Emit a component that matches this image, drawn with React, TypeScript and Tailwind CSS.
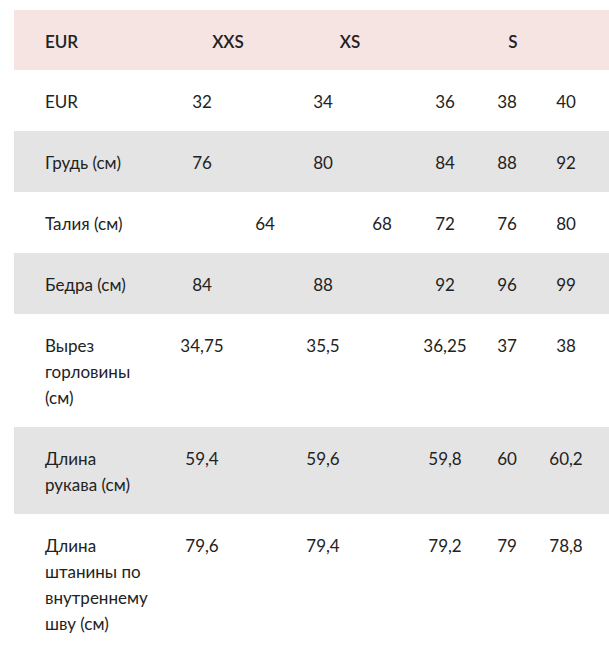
import React from "react";

type Row = { label: React.ReactNode; values: string[]; gray?: boolean };

const rows: Row[] = [
  { label: "EUR", values: ["32", "", "34", "", "36", "38", "40"] },
  { label: "Грудь (см)", values: ["76", "", "80", "", "84", "88", "92"], gray: true },
  { label: "Талия (см)", values: ["", "64", "", "68", "72", "76", "80"] },
  { label: "Бедра (см)", values: ["84", "", "88", "", "92", "96", "99"], gray: true },
  {
    label: (
      <>
        Вырез
        <br />
        горловины
        <br />
        (см)
      </>
    ),
    values: ["34,75", "", "35,5", "", "36,25", "37", "38"],
  },
  {
    label: (
      <>
        Длина
        <br />
        рукава (см)
      </>
    ),
    values: ["59,4", "", "59,6", "", "59,8", "60", "60,2"],
    gray: true,
  },
  {
    label: (
      <>
        Длина
        <br />
        штанины по
        <br />
        внутреннему
        <br />
        шву (см)
      </>
    ),
    values: ["79,6", "", "79,4", "", "79,2", "79", "78,8"],
  },
];

export default function App() {
  return (
    <div className="w-[609px] h-[660px] overflow-hidden bg-white pl-[14px] pt-[10px] font-['Lato','Liberation_Sans',sans-serif] text-[17px] leading-[26px] text-[#222]">
      <table className="table-fixed border-collapse w-[625px]">
        <colgroup>
          <col className="w-[151px]" />
          <col className="w-[74px]" />
          <col className="w-[52px]" />
          <col className="w-[64px]" />
          <col className="w-[54px]" />
          <col className="w-[72px]" />
          <col className="w-[52px]" />
          <col className="w-[66px]" />
          <col className="w-[40px]" />
        </colgroup>
        <thead>
          <tr className="bg-[#f5e4e2] h-[60px]">
            <th className="pl-[31px] pt-[4px] text-left font-semibold">EUR</th>
            <th colSpan={2} className="pt-[4px] text-center font-semibold">XXS</th>
            <th colSpan={2} className="pt-[4px] text-center font-semibold">XS</th>
            <th colSpan={3} className="pl-[18px] pt-[4px] text-center font-semibold">S</th>
            <th />
          </tr>
        </thead>
        <tbody>
          {rows.map((row, i) => (
            <tr key={i} className={row.gray ? "bg-[#e4e4e4]" : "bg-white"}>
              <td className="pl-[31px] pt-[19px] pb-[16px] align-top whitespace-nowrap">{row.label}</td>
              {row.values.map((v, j) => (
                <td key={j} className="pt-[19px] pb-[16px] align-top text-center whitespace-nowrap">
                  {v}
                </td>
              ))}
              <td />
            </tr>
          ))}
        </tbody>
      </table>
    </div>
  );
}
